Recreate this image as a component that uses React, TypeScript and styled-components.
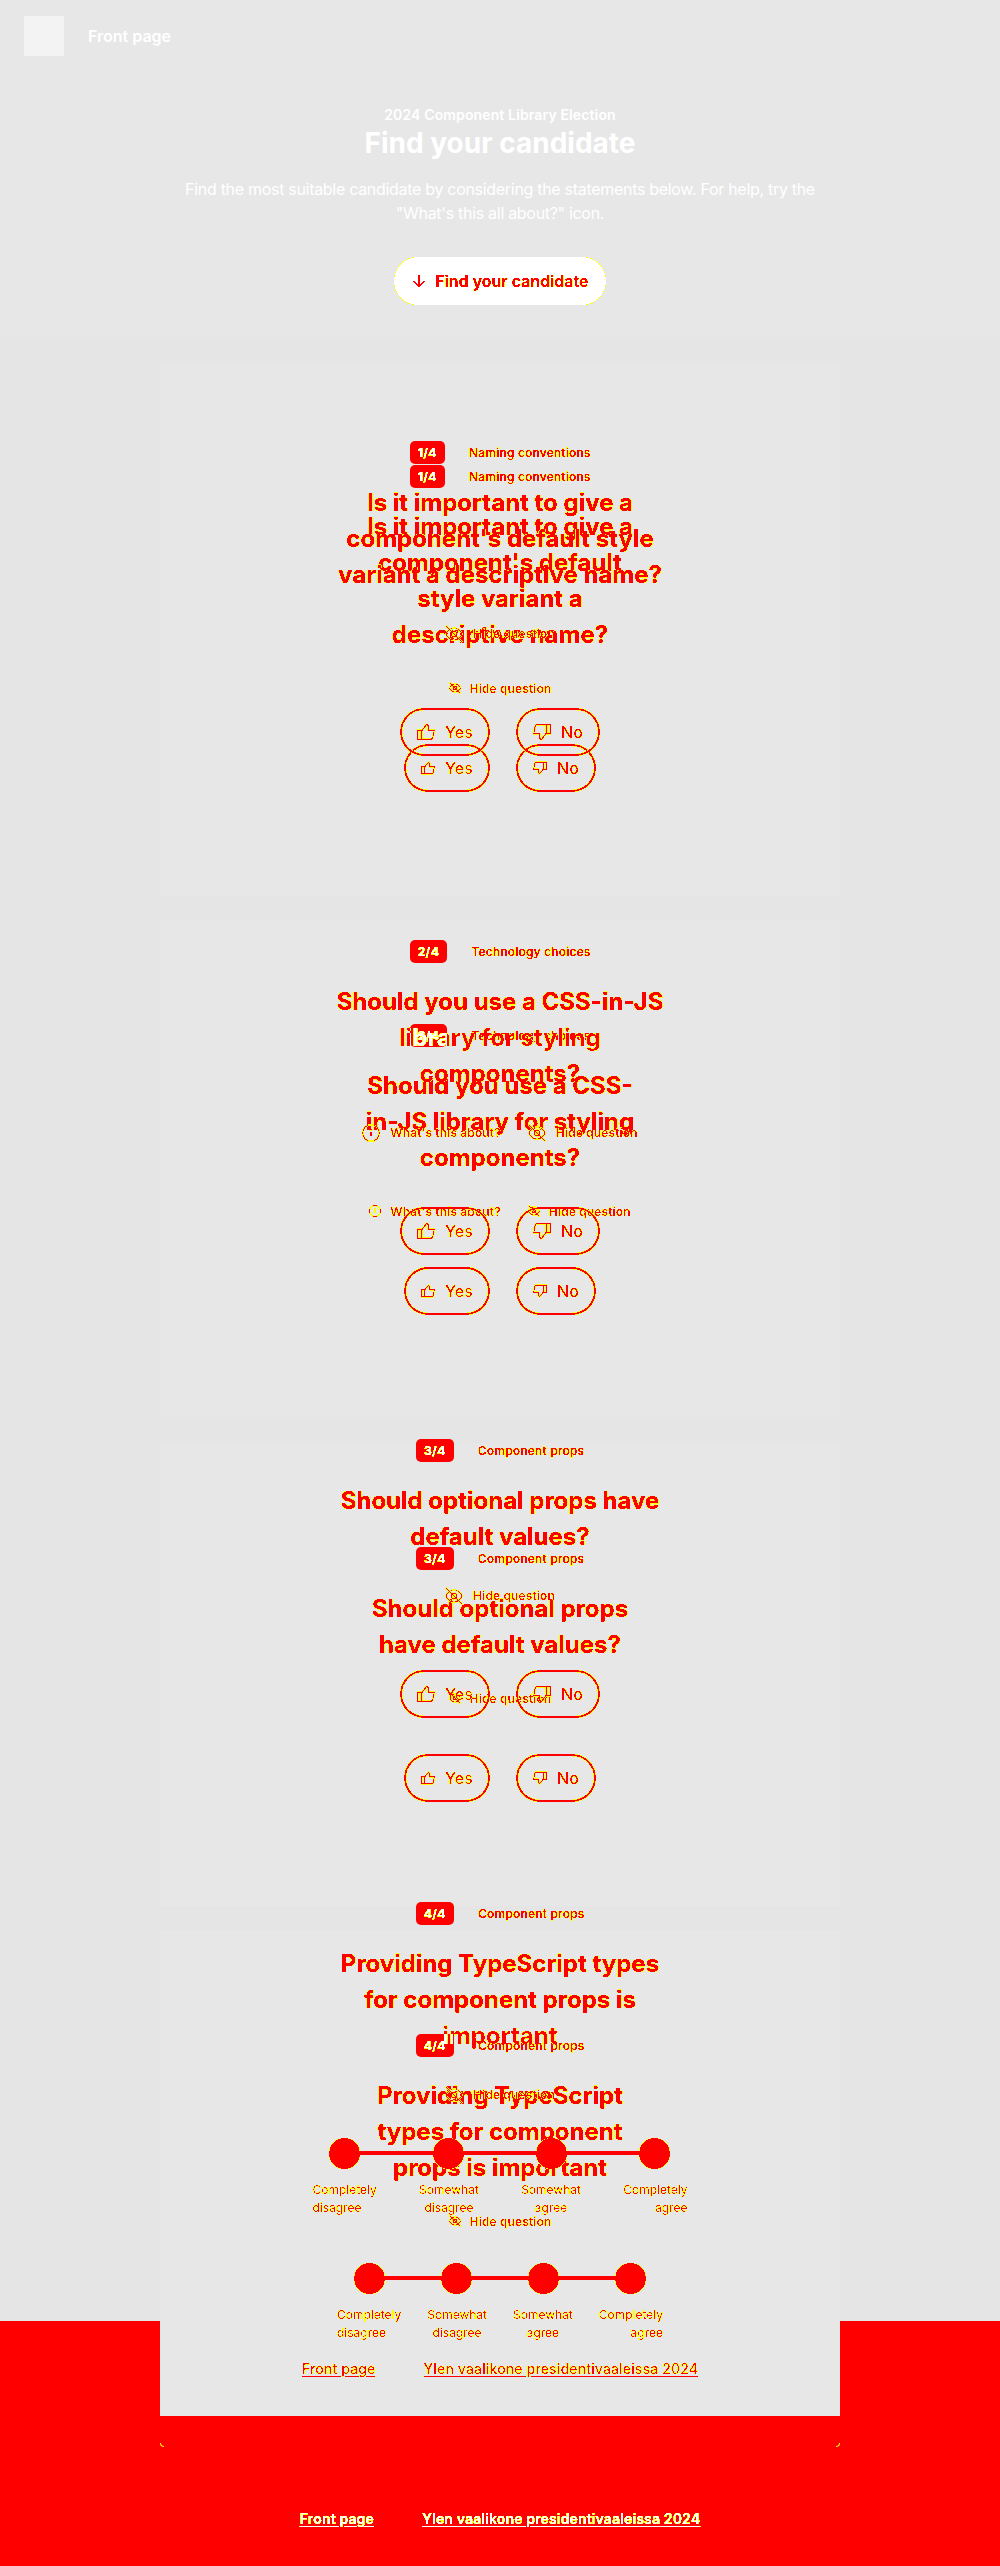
import React from 'react';
import styled, { createGlobalStyle, css } from 'styled-components';

const RED = '#ff0000';
const YELLOW = '#ffff00';
const SURFACE = '#e7e7e7';
const PAGE = '#e5e5e5';

const GlobalStyle = createGlobalStyle`
  body { margin: 0; background: ${PAGE}; }
  *, *::before, *::after { box-sizing: border-box; }
`;

const ink = css`
  color: ${RED};
  filter: url(#ink);
`;

const Page = styled.div`
  width: 1000px;
  font-family: Inter, "Liberation Sans", sans-serif;
  color: #fff;
  isolation: isolate;
`;

const Hero = styled.header`
  height: 337px;
  background: ${SURFACE};
  display: flex;
  flex-direction: column;
`;

const TopBar = styled.div`
  display: flex;
  align-items: center;
  gap: 24px;
  padding: 16px 24px;
`;

const Logo = styled.div`
  width: 40px;
  height: 40px;
  border-radius: 1px;
  background: #f3f3f3;
`;

const TopLink = styled.a`
  font-size: 16px;
  font-weight: 600;
`;

const Intro = styled.div`
  display: flex;
  flex-direction: column;
  align-items: center;
  text-align: center;
  padding-top: 32px;
`;

const Kicker = styled.p`
  margin: 0;
  font-size: 14px;
  font-weight: 600;
  line-height: 22px;
  letter-spacing: 0.13px;
`;

const Title = styled.h1`
  margin: 0;
  font-size: 28px;
  font-weight: 700;
  line-height: 34px;
`;

const Lead = styled.p`
  margin: 17px 0 0;
  width: 640px;
  font-size: 16px;
  line-height: 24px;
  letter-spacing: -0.3px;
`;

const Cta = styled.a`
  margin-top: 32px;
  width: 212px;
  height: 48px;
  border-radius: 24px;
  background: #fff;
  display: flex;
  align-items: center;
  justify-content: center;
  gap: 9px;
  font-size: 16px;
  font-weight: 600;
  text-shadow: 0.6px 0 ${RED};
  ${ink}
`;

const Main = styled.main`
  width: 680px;
  margin: 24px auto 0;
  display: flex;
  flex-direction: column;
  gap: 24px;
`;

const Card = styled.section<{ $height: number }>`
  position: relative;
  height: ${p => p.$height}px;
  background: ${SURFACE};
  display: grid;
  align-items: start;
  justify-items: center;
  z-index: 1;
`;

const Corners = styled.div`
  position: absolute;
  top: 483px;
  left: 0;
  width: 680px;
  height: 34px;
  &::before, &::after {
    content: '';
    position: absolute;
    bottom: 0;
    width: 4px;
    height: 4px;
    border-bottom: 1px solid ${YELLOW};
  }
  &::before { left: 0; border-left: 1px solid ${YELLOW}; border-bottom-left-radius: 4px; }
  &::after { right: 0; border-right: 1px solid ${YELLOW}; border-bottom-right-radius: 4px; }
`;

const Layer = styled.div<{ $top: number }>`
  grid-area: 1 / 1;
  margin-top: ${p => p.$top}px;
  display: flex;
  flex-direction: column;
  align-items: center;
`;

const Meta = styled.div`
  display: flex;
  align-items: center;
  gap: 24px;
  height: 23px;
`;

const Badge = styled.span`
  display: flex;
  align-items: center;
  height: 23px;
  padding: 0 8px;
  border-radius: 5px;
  background: ${RED};
  color: #fff;
  font-size: 12px;
  font-weight: 700;
  letter-spacing: 0.4px;
  & > span { filter: url(#ink); }
`;

const Category = styled.span`
  font-size: 12px;
  font-weight: 500;
  letter-spacing: 0.22px;
  text-shadow: 0.4px 0 ${RED};
  ${ink}
`;

const Question = styled.h2<{ $width: number }>`
  margin: 21px 0 0;
  width: ${p => p.$width}px;
  font-size: 24px;
  font-weight: 700;
  line-height: 36px;
  text-align: center;
  ${ink}
`;

const Line = styled.span`
  display: block;
  white-space: nowrap;
  text-shadow: 0 0 1px ${RED};
`;

const Knockout = styled.span<{ $x: number; $y: number; $w: number; $h: number }>`
  display: block;
  color: transparent;
  background: linear-gradient(#fff, #fff) ${p => p.$x}px ${p => p.$y}px / ${p => p.$w}px ${p => p.$h}px no-repeat, ${RED};
  background-clip: text;
  -webkit-background-clip: text;
`;

const Actions = styled.div<{ $large: boolean }>`
  display: flex;
  gap: 27px;
  height: ${p => (p.$large ? 19 : 14)}px;
  margin-top: ${p => (p.$large ? 31 : 28)}px;
  align-items: center;
`;

const Action = styled.span<{ $large: boolean }>`
  display: flex;
  align-items: center;
  gap: ${p => (p.$large ? 10 : 9)}px;
  font-size: 12px;
  font-weight: 600;
  letter-spacing: 0.12px;
  white-space: nowrap;
  ${ink}
`;

const Answers = styled.div<{ $large: boolean }>`
  display: flex;
  gap: 26px;
  margin-top: ${p => (p.$large ? 65 : 49)}px;
`;

const Answer = styled.button<{ $width: number }>`
  width: ${p => p.$width}px;
  height: 48px;
  padding: 0;
  border: 2px solid ${RED};
  border-radius: 24px;
  background: none;
  display: flex;
  align-items: center;
  justify-content: center;
  gap: 10px;
  font: 500 16px Inter, "Liberation Sans", sans-serif;
  ${ink}
`;

const Scale = styled.div<{ $large: boolean }>`
  display: flex;
  justify-content: space-between;
  align-items: center;
  width: ${p => (p.$large ? 341 : 292)}px;
  height: 30px;
  margin-top: ${p => (p.$large ? 34 : 35)}px;
  background: linear-gradient(${RED}, ${RED}) center / 100% 4px no-repeat;
`;

const Stop = styled.span`
  width: 31px;
  height: 31px;
  border-radius: 50%;
  background: ${RED};
  filter: url(#ink);
`;

const ScaleLabels = styled.div<{ $width: number }>`
  display: flex;
  justify-content: space-between;
  width: ${p => p.$width}px;
  margin-top: 13px;
  font-size: 12px;
  line-height: 18px;
  text-align: center;
  & > :first-child { text-align: left; }
  & > :last-child { text-align: right; }
`;

const ScaleLabel = styled.span`
  width: min-content;
  ${ink}
`;

const Links = styled.nav<{ $top: number; $white?: boolean }>`
  display: flex;
  justify-content: center;
  gap: 48px;
  margin-top: ${p => p.$top}px;
  font-size: 14px;
  line-height: 20px;
  font-weight: ${p => (p.$white ? 600 : 500)};
  letter-spacing: 0.15px;
  white-space: nowrap;
  a {
    color: ${p => (p.$white ? '#fff' : RED)};
    text-decoration: underline;
    text-underline-offset: 2px;
    filter: url(#ink);
  }
`;

const Footer = styled.footer`
  height: 245px;
  margin-top: -95px;
  background: ${RED};
  display: flow-root;
`;

const Defs = styled.svg`
  position: absolute;
  width: 0;
  height: 0;
`;

const InkFilter = () => (
  <Defs aria-hidden="true">
    <filter id="ink" x="-5%" y="-20%" width="110%" height="140%" colorInterpolationFilters="sRGB">
      <feColorMatrix values="1 0 0 0 0  0 0 1 -1 1  0 0 1 1 -1  0 0 0 12 -0.7" />
      <feComponentTransfer>
        <feFuncR type="discrete" tableValues="1 1" />
        <feFuncG type="discrete" tableValues="0 0 0 1 1 1 1 1 1 1" />
        <feFuncB type="discrete" tableValues="0 0 0 0 0 0 1 1 1 1" />
        <feFuncA type="discrete" tableValues="0 1" />
      </feComponentTransfer>
    </filter>
  </Defs>
);

const icon = { fill: 'none', stroke: 'currentColor', strokeLinejoin: 'miter' as const };

const Thumb = ({ size, down }: { size: number; down?: boolean }) => (
  <svg width={size} height={size} viewBox="0 0 18 18" {...icon} strokeWidth={size > 16 ? 1.3 : 1.5}>
    <g transform={down ? 'rotate(180 9 9)' : undefined}>
      <path d="M.7 7.500H4.500V16.300H.7zM4.500 8.500L9.500 1.300L11.200 2.800V7.200H17.300L15.800 14.600L14.400 16.300H4.500" />
    </g>
  </svg>
);

const Hide = ({ size }: { size: number }) => (
  <svg width={size} height={size} viewBox="0 0 18 18" {...icon} strokeWidth={size > 16 ? 1.1 : 1.7}>
    <path d="M1 9C3 4.500 6 3 9 3s6 1.500 8 6c-2 4.500-5 6-8 6S3 13.500 1 9zM.8.8L17.200 17.200" />
    <circle cx="9" cy="9" r="2.600" />
  </svg>
);

const Info = ({ size }: { size: number }) => (
  <svg width={size} height={size} viewBox="0 0 18 18" {...icon} strokeWidth={size > 16 ? 1.1 : 1.5}>
    <circle cx="9" cy="9" r="8.300" />
    <path d="M9 8v4M9 5v1.500" strokeWidth="1.800" />
  </svg>
);

const Arrow = () => (
  <svg width="14" height="14" viewBox="0 0 14 14" {...icon} strokeWidth="1.5">
    <path d="M7 1v11.500M1.500 7L7 12.500L12.500 7" />
  </svg>
);

type LayerProps = {
  top: number;
  large: boolean;
  index: number;
  category: string;
  lines: React.ReactNode[];
  about?: boolean;
  scale?: boolean;
  children?: React.ReactNode;
};

const QuestionLayer = ({ top, large, index, category, lines, about, scale, children }: LayerProps) => {
  const size = large ? 18 : 12;
  return (
    <Layer $top={top}>
      <Meta>
        <Badge><span>{index}/4</span></Badge>
        <Category>{category}</Category>
      </Meta>
      <Question $width={large ? 340 : 280}>
        {lines.map((line, i) => (typeof line === 'string' ? <Line key={i}>{line}</Line> : line))}
      </Question>
      <Actions $large={large}>
        {about && <Action $large={large}><Info size={size} />What's this about?</Action>}
        <Action $large={large}><Hide size={size} />Hide question</Action>
      </Actions>
      {scale ? (
        <>
          <Scale $large={large}><Stop /><Stop /><Stop /><Stop /></Scale>
          <ScaleLabels $width={large ? 375 : 326}>
            {['Completely disagree', 'Somewhat disagree', 'Somewhat agree', 'Completely agree'].map(label => (
              <ScaleLabel key={label}>{label}</ScaleLabel>
            ))}
          </ScaleLabels>
        </>
      ) : (
        <Answers $large={large}>
          <Answer $width={large ? 90 : 86}><Thumb size={large ? 18 : 14} />Yes</Answer>
          <Answer $width={large ? 84 : 80}><Thumb size={large ? 18 : 14} down />No</Answer>
        </Answers>
      )}
      {children}
    </Layer>
  );
};

const FooterLinks = ({ top, white }: { top: number; white?: boolean }) => (
  <Links $top={top} $white={white}>
    <a>Front page</a>
    <a>Ylen vaalikone presidentivaaleissa 2024</a>
  </Links>
);

export default function App() {
  return (
    <Page>
      <GlobalStyle />
      <InkFilter />
      <Hero>
        <TopBar>
          <Logo />
          <TopLink>Front page</TopLink>
        </TopBar>
        <Intro>
          <Kicker>2024 Component Library Election</Kicker>
          <Title>Find your candidate</Title>
          <Lead>Find the most suitable candidate by considering the statements below. For help, try the "What's this all about?" icon.</Lead>
          <Cta><Arrow />Find your candidate</Cta>
        </Intro>
      </Hero>
      <Main>
        <Card $height={535}>
          <QuestionLayer top={104} large={false} index={1} category="Naming conventions"
            lines={['Is it important to give a', "component's default", 'style variant a', 'descriptive name?']} />
          <QuestionLayer top={80} large index={1} category="Naming conventions"
            lines={['Is it important to give a', "component's default style", 'variant a descriptive name?']} />
        </Card>
        <Card $height={499}>
          <QuestionLayer top={104} large={false} index={2} category="Technology choices" about
            lines={['Should you use a CSS-', 'in-JS library for styling', 'components?']} />
          <QuestionLayer top={20} large index={2} category="Technology choices" about
            lines={['Should you use a CSS-in-JS',
              <Knockout key="k" $x={80} $y={0} $w={37} $h={36}>library for styling</Knockout>,
              'components?']} />
        </Card>
        <Card $height={463}>
          <QuestionLayer top={104} large={false} index={3} category="Component props"
            lines={['Should optional props', 'have default values?']} />
          <QuestionLayer top={-4} large index={3} category="Component props"
            lines={['Should optional props have', 'default values?']} />
        </Card>
        <Card $height={486}>
          <QuestionLayer top={104} large={false} index={4} category="Component props" scale
            lines={['Providing TypeScript', 'types for component', 'props is important']} />
          <QuestionLayer top={-28} large index={4} category="Component props" scale
            lines={['Providing TypeScript types', 'for component props is',
              <Knockout key="k" $x={86} $y={16} $w={37} $h={20}>important</Knockout>]}>
            <FooterLinks top={142} />
          </QuestionLayer>
          <Corners />
        </Card>
      </Main>
      <Footer>
        <FooterLinks top={188} white />
      </Footer>
    </Page>
  );
}
